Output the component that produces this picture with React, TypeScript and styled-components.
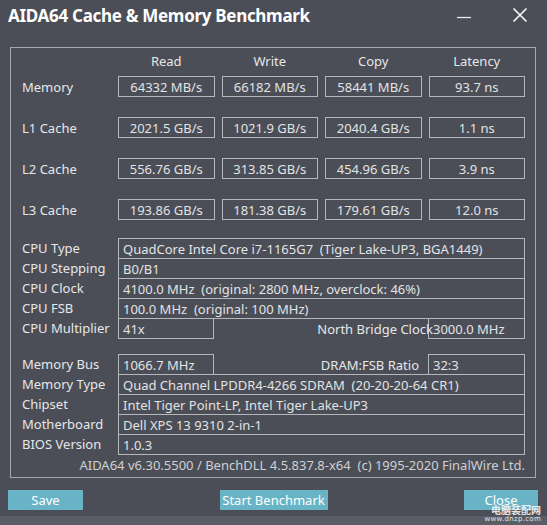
import React from "react"
import styled, { createGlobalStyle } from "styled-components"

const GlobalStyle = createGlobalStyle`
  html, body {
    margin: 0;
    padding: 0;
    background: #4b4e56;
  }
  body {
    font-family: "Noto Sans", "Open Sans", sans-serif;
    color: #e6e7e9;
  }
`

const Window = styled.div`
  position: relative;
  width: 547px;
  height: 525px;
  display: flex;
  flex-direction: column;
  background: #4b4e56;
  overflow: hidden;
`

const TitleBar = styled.div`
  height: 47px;
  display: flex;
  align-items: flex-start;
  padding: 0 0 0 8px;
`

const Title = styled.h1`
  margin: 4px 0 0 0;
  font-size: 17px;
  font-weight: 700;
  color: #ffffff;
  flex: 1;
  letter-spacing: -0.3px;
`

const WinButton = styled.button<{ $gap: number }>`
  width: 46px;
  height: 32px;
  margin-right: ${(p) => p.$gap}px;
  border: none;
  background: transparent;
  display: flex;
  align-items: center;
  justify-content: center;
  padding: 0;
`

const Group = styled.div`
  margin: 0 11px 0 10px;
  height: 431px;
  border: 1px solid #a5a8ad;
  box-sizing: border-box;
  padding: 0 10px 0 11px;
  display: flex;
  flex-direction: column;
`

const BenchGrid = styled.div`
  display: grid;
  grid-template-columns: 89px repeat(4, 96.5px);
  column-gap: 7px;
  row-gap: 20px;
  margin-top: 5px;
`

const Header = styled.div`
  text-align: center;
  font-size: 13px;
  height: 16px;
  line-height: 16px;
  margin-bottom: -13px;
`

const RowLabel = styled.div`
  font-size: 13px;
  display: flex;
  align-items: center;
  height: 21px;
  white-space: nowrap;
`

const ValueBox = styled.div`
  height: 21px;
  box-sizing: border-box;
  border: 1px solid #b4b7bb;
  font-size: 13px;
  color: #e2e3e5;
  display: flex;
  align-items: center;
  justify-content: center;
`

const InfoBlock = styled.div<{ $top: number }>`
  display: flex;
  flex-direction: column;
  margin-top: ${(p) => p.$top}px;
`

const InfoRow = styled.div`
  display: flex;
  height: 20px;
`

const InfoLabel = styled.div`
  width: 96px;
  font-size: 13px;
  display: flex;
  align-items: center;
  white-space: nowrap;
`

const Cell = styled.div<{ $w?: number }>`
  ${(p) => (p.$w ? `width: ${p.$w}px;` : "flex: 1;")}
  height: 21px;
  box-sizing: border-box;
  border: 1px solid #b4b7bb;
  margin-bottom: -1px;
  font-size: 13px;
  color: #e2e3e5;
  padding-left: 4px;
  display: flex;
  align-items: center;
  white-space: pre;
`

const SideLabel = styled.div<{ $overlap: number }>`
  flex: 1;
  display: flex;
  justify-content: flex-end;
  align-items: center;
  font-size: 13px;
  white-space: nowrap;
  margin-right: ${(p) => p.$overlap}px;
  padding-top: 1px;
  position: relative;
  z-index: 1;
`

const Footer = styled.div`
  margin-top: auto;
  margin-bottom: 3px;
  text-align: right;
  font-size: 13px;
  color: #cfd0d3;
  white-space: pre;
`

const ButtonBar = styled.div`
  display: flex;
  justify-content: space-between;
  align-items: center;
  padding: 0 9px 0 8px;
  margin-top: 12px;
  height: 20px;
`

const Button = styled.button<{ $w: number }>`
  width: ${(p) => p.$w}px;
  height: 20px;
  border: none;
  background: #68b3c6;
  color: #ffffff;
  font-family: "Noto Sans", "Open Sans", sans-serif;
  font-size: 13px;
  padding: 0;
  line-height: 20px;
`

const BottomStrip = styled.div`
  margin-top: auto;
  height: 9px;
  background: #585d66;
`

const Watermark = styled.div`
  position: absolute;
  right: 6px;
  bottom: 2px;
  display: flex;
  flex-direction: column;
  align-items: flex-end;
  color: #ffffff;
  opacity: 0.85;
  line-height: 1;
  font-family: "Noto Sans CJK SC", sans-serif;
  span:first-child {
    font-size: 10px;
    font-weight: 700;
  }
  span:last-child {
    font-size: 7px;
    font-family: "DejaVu Sans", sans-serif;
    letter-spacing: 0.3px;
    margin-top: 1px;
  }
`

const bench = [
  { label: "Memory", values: ["64332 MB/s", "66182 MB/s", "58441 MB/s", "93.7 ns"] },
  { label: "L1 Cache", values: ["2021.5 GB/s", "1021.9 GB/s", "2040.4 GB/s", "1.1 ns"] },
  { label: "L2 Cache", values: ["556.76 GB/s", "313.85 GB/s", "454.96 GB/s", "3.9 ns"] },
  { label: "L3 Cache", values: ["193.86 GB/s", "181.38 GB/s", "179.61 GB/s", "12.0 ns"] },
]

const cpuRows = [
  ["CPU Type", "QuadCore Intel Core i7-1165G7  (Tiger Lake-UP3, BGA1449)"],
  ["CPU Stepping", "B0/B1"],
  ["CPU Clock", "4100.0 MHz  (original: 2800 MHz, overclock: 46%)"],
  ["CPU FSB", "100.0 MHz  (original: 100 MHz)"],
]

const memRows = [
  ["Memory Type", "Quad Channel LPDDR4-4266 SDRAM  (20-20-20-64 CR1)"],
  ["Chipset", "Intel Tiger Point-LP, Intel Tiger Lake-UP3"],
  ["Motherboard", "Dell XPS 13 9310 2-in-1"],
  ["BIOS Version", "1.0.3"],
]

export default function App() {
  return (
    <>
      <GlobalStyle />
      <Window>
        <TitleBar>
          <Title>AIDA64 Cache &amp; Memory Benchmark</Title>
          <WinButton $gap={10} aria-label="Minimize">
            <svg width="16" height="16" viewBox="0 0 16 16">
              <line x1="1" y1="9.5" x2="15" y2="9.5" stroke="#e8e8e8" strokeWidth="1.3" />
            </svg>
          </WinButton>
          <WinButton $gap={4} aria-label="Close">
            <svg width="16" height="16" viewBox="0 0 16 16">
              <path d="M1.5 0.5 L14.5 13.5 M14.5 0.5 L1.5 13.5" stroke="#ffffff" strokeWidth="1.5" />
            </svg>
          </WinButton>
        </TitleBar>

        <Group>
          <BenchGrid>
            <div />
            <Header>Read</Header>
            <Header>Write</Header>
            <Header>Copy</Header>
            <Header>Latency</Header>
            {bench.map((row) => (
              <React.Fragment key={row.label}>
                <RowLabel>{row.label}</RowLabel>
                {row.values.map((v) => (
                  <ValueBox key={v}>{v}</ValueBox>
                ))}
              </React.Fragment>
            ))}
          </BenchGrid>

          <InfoBlock $top={18}>
            {cpuRows.map(([label, value]) => (
              <InfoRow key={label}>
                <InfoLabel>{label}</InfoLabel>
                <Cell>{value}</Cell>
              </InfoRow>
            ))}
            <InfoRow>
              <InfoLabel>CPU Multiplier</InfoLabel>
              <Cell $w={96}>41x</Cell>
              <SideLabel $overlap={-5}>North Bridge Clock</SideLabel>
              <Cell $w={97}>3000.0 MHz</Cell>
            </InfoRow>
          </InfoBlock>

          <InfoBlock $top={16}>
            <InfoRow>
              <InfoLabel>Memory Bus</InfoLabel>
              <Cell $w={96}>1066.7 MHz</Cell>
              <SideLabel $overlap={9}>DRAM:FSB Ratio</SideLabel>
              <Cell $w={97}>32:3</Cell>
            </InfoRow>
            {memRows.map(([label, value]) => (
              <InfoRow key={label}>
                <InfoLabel>{label}</InfoLabel>
                <Cell>{value}</Cell>
              </InfoRow>
            ))}
          </InfoBlock>

          <Footer>AIDA64 v6.30.5500 / BenchDLL 4.5.837.8-x64  (c) 1995-2020 FinalWire Ltd.</Footer>
        </Group>

        <ButtonBar>
          <Button $w={75}>Save</Button>
          <Button $w={108}>Start Benchmark</Button>
          <Button $w={74}>Close</Button>
        </ButtonBar>

        <BottomStrip />
        <Watermark>
          <span>电脑装配网</span>
          <span>www.dnzp.com</span>
        </Watermark>
      </Window>
    </>
  )
}
